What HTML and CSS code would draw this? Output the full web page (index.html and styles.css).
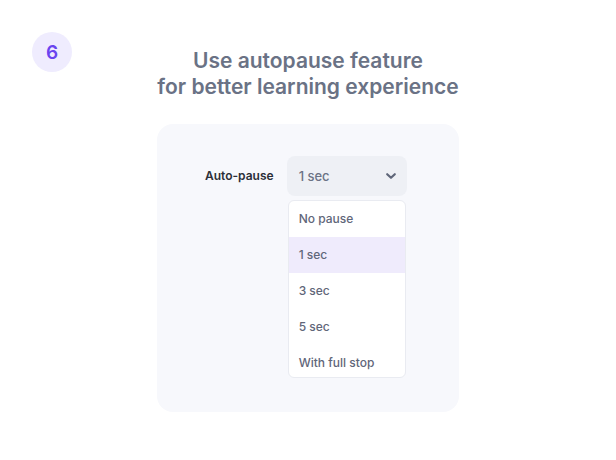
FILE: index.html
```html
<!DOCTYPE html>
<html>
<head>
<meta charset="utf-8">
<link rel="stylesheet" href="styles.css">
</head>
<body>
<div class="page">
  <div class="badge">6</div>
  <h1 class="title">Use autopause feature<br>for better learning experience</h1>
  <div class="card">
    <div class="row">
      <span class="label">Auto-pause</span>
      <div class="selectwrap">
        <div class="select">
          <span>1 sec</span>
          <svg class="chev" width="12" height="8" viewBox="0 0 12 8"><path d="M2.2 2.2l3.8 3.6 3.8-3.6" fill="none" stroke="#5f6679" stroke-width="2.2" stroke-linecap="round" stroke-linejoin="round"/></svg>
        </div>
        <ul class="menu">
          <li>No pause</li>
          <li class="active">1 sec</li>
          <li>3 sec</li>
          <li>5 sec</li>
          <li>With full stop</li>
        </ul>
      </div>
    </div>
  </div>
</div>
</body>
</html>
```
FILE: styles.css
```css
* { box-sizing: border-box; }
html, body { margin: 0; padding: 0; background: #fff; }
body { font-family: Inter, "Noto Sans", sans-serif; width: 616px; height: 460px; overflow: hidden; }
.page { position: relative; width: 616px; height: 460px; padding-top: 48px; display: flex; flex-direction: column; align-items: center; }
.badge {
  position: absolute; left: 32px; top: 32px; width: 40px; height: 40px; border-radius: 50%;
  background: #efecfe; color: #6a45ef; font-weight: 600; font-size: 19px;
  display: flex; align-items: center; justify-content: center;
}
.title {
  margin: 0; font-size: 21px; line-height: 26px; font-weight: 600; color: #6a7285;
  text-align: center;
}
.card {
  margin-top: 24px; width: 302px; height: 288px; border-radius: 16px;
  background: #f7f8fc; padding: 32px 0 0 48px;
}
.row { display: flex; align-items: flex-start; gap: 13px; }
.label { font-size: 12px; font-weight: 600; color: #2b2f38; line-height: 40px; }
.selectwrap { display: flex; flex-direction: column; gap: 4px; width: 120px; }
.select {
  height: 40px; border-radius: 8px; background: #eef0f5; display: flex; align-items: center;
  justify-content: space-between; padding: 0 10px 0 12px; font-size: 13px; color: #6b7385; font-weight: 500;
}
.menu {
  list-style: none; margin: 0 1px; padding: 0; background: #fff; border: 1px solid #e9ebf1; border-radius: 6px;
  height: 178px; overflow: hidden;
}
.menu li { height: 36px; line-height: 35px; padding-left: 10px; font-size: 12px; font-weight: 500; color: #5f6679; }
.menu li.active { background: #efebfc; }
```
